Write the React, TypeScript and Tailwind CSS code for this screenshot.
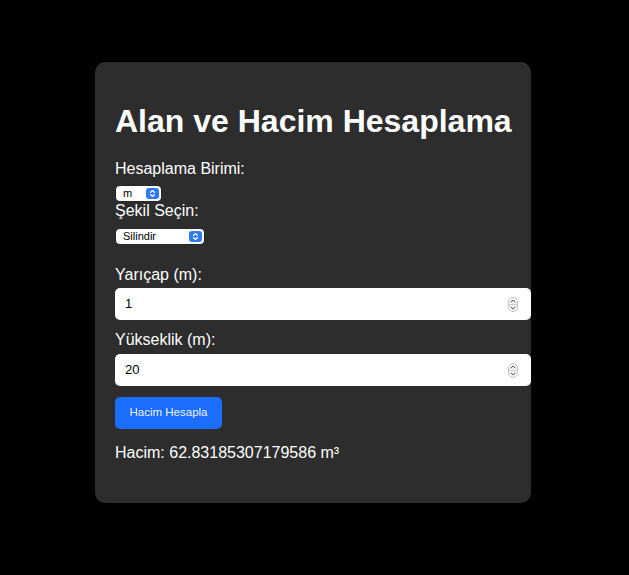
import React from 'react';

const FONT = { fontFamily: '"Liberation Sans", Arial, Helvetica, sans-serif' };

// macOS-style popup button: white pill with a blue stepper square on the right
function PopupSelect({ value, width }: { value: string; width: string }) {
  return (
    <div
      className={`mt-0 flex h-[15px] ${width} items-center justify-between rounded-[4px] bg-white pl-[7px] pr-[2px] shadow-[0_0_0_0.5px_rgba(0,0,0,0.25)]`}
    >
      <span className="text-[11px] leading-none text-black">{value}</span>
      <span className="flex h-[11px] w-[13px] items-center justify-center rounded-[3px] bg-[#2f7bf6]">
        <svg width="7" height="9" viewBox="0 0 7 9" fill="none">
          <path d="M1.5 3.5 L3.5 1.5 L5.5 3.5" stroke="white" strokeWidth="1.1" strokeLinecap="round" strokeLinejoin="round" />
          <path d="M1.5 5.5 L3.5 7.5 L5.5 5.5" stroke="white" strokeWidth="1.1" strokeLinecap="round" strokeLinejoin="round" />
        </svg>
      </span>
    </div>
  );
}

function Spinner() {
  return (
    <svg width="10" height="15" viewBox="0 0 10 15" fill="none" className="shrink-0">
      <rect x="0.5" y="0.5" width="9" height="14" rx="4.5" fill="#f4f4f4" stroke="#c4c4c4" />
      <line x1="1" y1="7.5" x2="9" y2="7.5" stroke="#d0d0d0" />
      <path d="M3 5 L5 3 L7 5" stroke="#555" strokeWidth="1" strokeLinecap="round" strokeLinejoin="round" />
      <path d="M3 10 L5 12 L7 10" stroke="#555" strokeWidth="1" strokeLinecap="round" strokeLinejoin="round" />
    </svg>
  );
}

function NumberField({ value, className = '' }: { value: string; className?: string }) {
  return (
    <div className={`flex h-[32px] w-[416px] items-center justify-between rounded-[5px] bg-white pl-[10px] pr-[13px] ${className}`}>
      <span className="text-[13px] text-black">{value}</span>
      <Spinner />
    </div>
  );
}

export default function App() {
  return (
    <div className="min-h-[575px] bg-black pt-[62px]" style={FONT}>
      <div className="ml-[95px] w-[436px] rounded-[10px] bg-[#2d2d2d] px-[20px] pt-[20px] pb-[41px] text-white">
        <h1 className="mt-[21px] whitespace-nowrap text-[32px] font-bold leading-[36px]">Alan ve Hacim Hesaplama</h1>

        <label className="mt-[21px] block text-[16px] leading-[18px]">Hesaplama Birimi:</label>
        <div className="mt-[8px] pl-[1px]">
          <PopupSelect value="m" width="w-[45px]" />
        </div>

        <label className="mt-[1px] block text-[16px] leading-[18px]">Şekil Seçin:</label>
        <div className="mt-[9px] pl-[1px]">
          <PopupSelect value="Silindir" width="w-[88px]" />
        </div>

        <label className="mt-[22px] block text-[16px] leading-[18px]">Yarıçap (m):</label>
        <NumberField value="1" className="mt-[4px]" />

        <label className="mt-[11px] block text-[16px] leading-[18px]">Yükseklik (m):</label>
        <NumberField value="20" className="mt-[5px]" />

        <button className="mt-[11px] flex h-[32px] w-[107px] items-center justify-center rounded-[5px] bg-[#1a6dfd] text-[11.5px] text-[#eef3ff]">
          Hacim Hesapla
        </button>

        <p className="mt-[15px] text-[16px] leading-[18px]">Hacim: 62.83185307179586 m³</p>
      </div>
    </div>
  );
}
